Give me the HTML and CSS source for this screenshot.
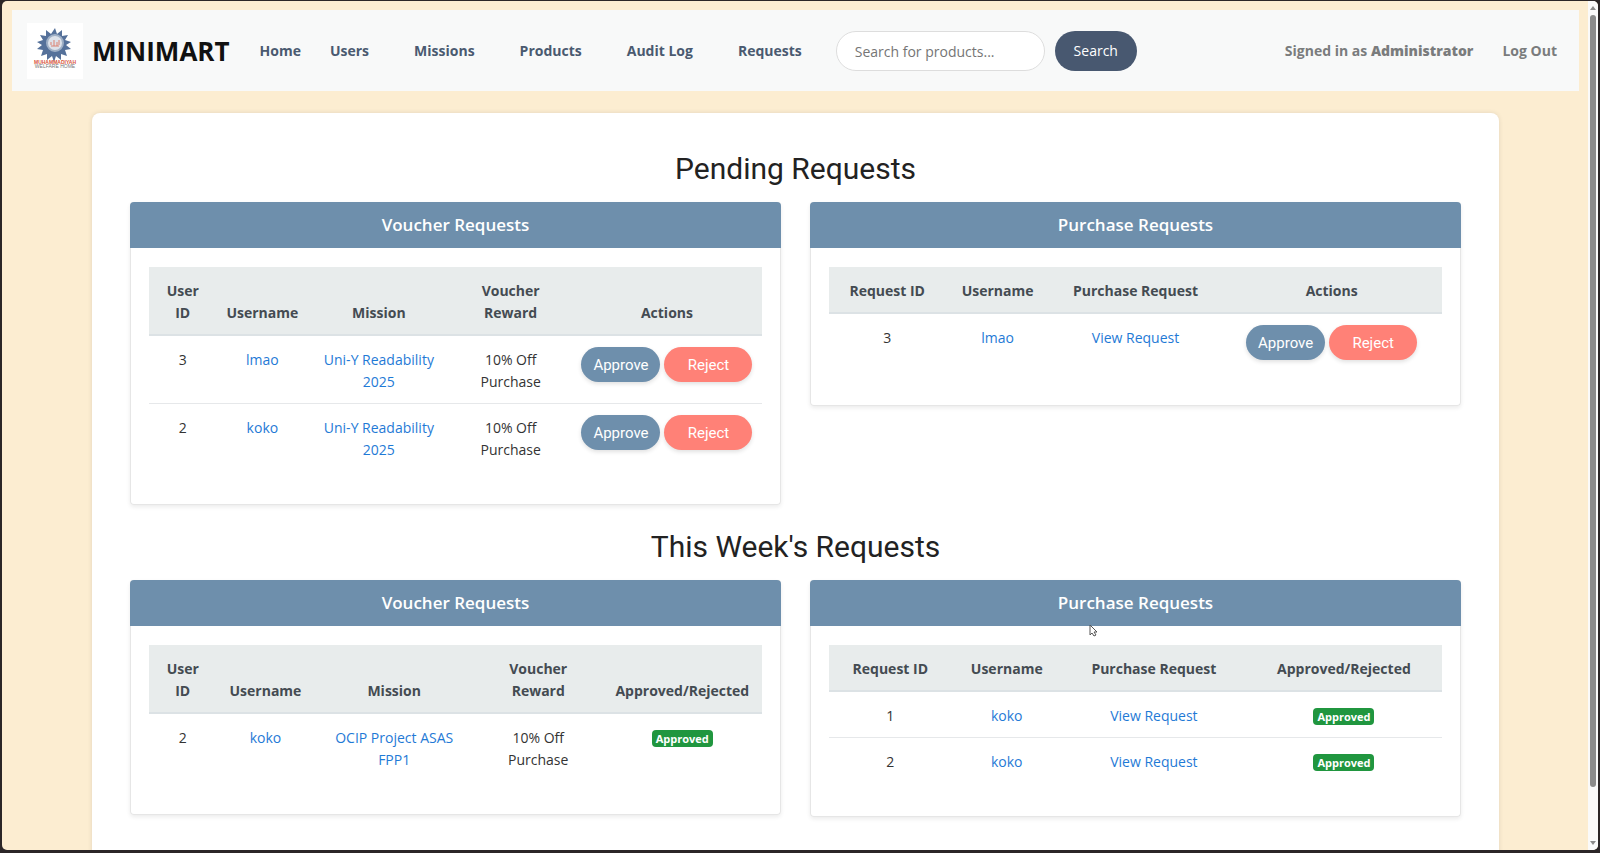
FILE: index.html
```html
<!DOCTYPE html>
<html lang="en">
<head>
	<title>Minimart - Requests</title>
	<meta charset="utf-8">
	<link rel="stylesheet" href="styles.css">
</head>
<body>
<div class="window">
	<div class="page">
		<nav class="navbar">
			<a class="brand" href="#">
				<svg class="logo" viewBox="0 0 56 56" aria-hidden="true">
					<rect width="56" height="56" fill="#fff"/>
					<path d="M28 5l2 6 5-4 0 6 6-1-3 5 6 2-5 3 5 4-6 1 2 6-6-2 0 6-5-4-2 6-2-6-5 4 0-6-6 2 2-6-6-1 5-4-5-3 6-2-3-5 6 1 0-6 5 4z" fill="#55719a"/>
					<circle cx="28" cy="20" r="8" fill="#dde2ea" stroke="#9fb0c6" stroke-width="2"/>
					<path d="M24 22v-3M27 23v-6M30 23v-4M32 22v-5M24 23h8" stroke="#dc8272" stroke-width="1" fill="none"/>
					<text x="28" y="41" class="logo-name">MUHAMMADIYAH</text>
					<text x="28" y="45" class="logo-sub">WELFARE HOME</text>
				</svg>
				<span>MINIMART</span>
			</a>
			<div class="links">
				<a class="home" href="#">Home</a>
				<a href="#">Users</a>
				<a href="#">Missions</a>
				<a href="#">Products</a>
				<a href="#">Audit Log</a>
				<a href="#">Requests</a>
			</div>
			<form class="search">
				<input type="text" placeholder="Search for products..." aria-label="Search for products">
				<button type="button">Search</button>
			</form>
			<div class="account">
				<span>Signed in as <b>Administrator</b></span>
				<a href="#">Log Out</a>
			</div>
		</nav>

		<main class="container">
			<h2>Pending Requests</h2>
			<div class="row">
				<section class="card">
					<h5>Voucher Requests</h5>
					<div class="card-body">
						<table class="vouchers">
							<thead>
								<tr><th>User ID</th><th>Username</th><th>Mission</th><th>Voucher Reward</th><th>Actions</th></tr>
							</thead>
							<tbody>
								<tr>
									<td>3</td>
									<td><a href="#">lmao</a></td>
									<td><a href="#">Uni-Y Readability 2025</a></td>
									<td>10% Off Purchase</td>
									<td class="actions-cell"><div class="actions"><button class="approve">Approve</button><button class="reject">Reject</button></div></td>
								</tr>
								<tr>
									<td>2</td>
									<td><a href="#">koko</a></td>
									<td><a href="#">Uni-Y Readability 2025</a></td>
									<td>10% Off Purchase</td>
									<td class="actions-cell"><div class="actions"><button class="approve">Approve</button><button class="reject">Reject</button></div></td>
								</tr>
							</tbody>
						</table>
					</div>
				</section>
				<section class="card">
					<h5>Purchase Requests</h5>
					<div class="card-body">
						<table class="purchases">
							<thead>
								<tr><th>Request ID</th><th>Username</th><th>Purchase Request</th><th>Actions</th></tr>
							</thead>
							<tbody>
								<tr>
									<td>3</td>
									<td><a href="#">lmao</a></td>
									<td><a href="#">View Request</a></td>
									<td class="actions-cell"><div class="actions"><button class="approve">Approve</button><button class="reject">Reject</button></div></td>
								</tr>
							</tbody>
						</table>
					</div>
				</section>
			</div>

			<h2>This Week's Requests</h2>
			<div class="row">
				<section class="card">
					<h5>Voucher Requests</h5>
					<div class="card-body">
						<table class="vouchers-done">
							<thead>
								<tr><th>User ID</th><th>Username</th><th>Mission</th><th>Voucher Reward</th><th>Approved/Rejected</th></tr>
							</thead>
							<tbody>
								<tr>
									<td>2</td>
									<td><a href="#">koko</a></td>
									<td><a href="#">OCIP Project ASAS FPP1</a></td>
									<td>10% Off Purchase</td>
									<td><span class="badge">Approved</span></td>
								</tr>
							</tbody>
						</table>
					</div>
				</section>
				<section class="card">
					<h5>Purchase Requests</h5>
					<div class="card-body">
						<table class="purchases-done">
							<thead>
								<tr><th>Request ID</th><th>Username</th><th>Purchase Request</th><th>Approved/Rejected</th></tr>
							</thead>
							<tbody>
								<tr>
									<td>1</td>
									<td><a href="#">koko</a></td>
									<td><a href="#">View Request</a></td>
									<td><span class="badge">Approved</span></td>
								</tr>
								<tr>
									<td>2</td>
									<td><a href="#">koko</a></td>
									<td><a href="#">View Request</a></td>
									<td><span class="badge">Approved</span></td>
								</tr>
							</tbody>
						</table>
					</div>
				</section>
			</div>
		</main>
	</div>
	<div class="scrollbar">
		<span class="arrow up"></span>
		<span class="thumb"></span>
		<span class="arrow down"></span>
	</div>
</div>
<svg class="cursor" viewBox="0 0 9 13" aria-hidden="true">
	<path d="M1 1v10l2-2 2 3 2-1-2-3h3z" fill="#fff" stroke="#555" stroke-width="1"/>
</svg>
</body>
</html>
```
FILE: styles.css
```css
*{
	box-sizing: border-box;
}
body{
	margin: 0;
	height: 100vh;
	padding: 1px 2px 3px;
	background: #2b2627;
	font: 14px/22px "Open Sans", "Noto Sans", sans-serif;
	color: #333;
	overflow: hidden;
}
a{
	color: #1f7ad6;
	text-decoration: none;
}
button, input{
	font: inherit;
}
.window{
	display: flex;
	height: 100%;
	border-radius: 5px;
	background: #fcedd1;
	overflow: hidden;
}
.page{
	flex: 1;
	padding: 9px 9px 0 10px;
	overflow: hidden;
}

/* navbar */
.navbar{
	display: flex;
	align-items: center;
	height: 81px;
	padding: 1px 22px 0 15px;
	background: #f8f9f9;
	font-weight: 700;
	white-space: nowrap;
}
.brand{
	display: flex;
	align-items: center;
	gap: 9px;
	color: #111;
	font-size: 26px;
}
.logo{
	width: 56px;
	height: 56px;
}
.logo-name, .logo-sub{
	font-family: "Liberation Sans", sans-serif;
	font-size: 5px;
	font-weight: 700;
	text-anchor: middle;
	fill: #d9573d;
}
.logo-sub{
	font-weight: 400;
	fill: #777;
}
.links{
	display: flex;
	gap: 45px;
	margin-left: 30px;
}
.links a{
	color: #4a5a70;
}
.links .home{
	margin-right: -16px;
}
.search{
	display: flex;
	gap: 10px;
	margin-left: 34px;
	font-weight: 400;
}
.search input{
	width: 209px;
	height: 40px;
	padding: 0 18px;
	border: 1px solid #ddd;
	border-radius: 20px;
	background: #fff;
}
.search input::placeholder{
	color: #757575;
}
.search button{
	width: 82px;
	height: 40px;
	padding: 0;
	border: 0;
	border-radius: 20px;
	background: #485870;
	color: #fff;
}
.account{
	display: flex;
	gap: 29px;
	margin-left: auto;
	color: #7a7c7d;
}
.account a{
	color: inherit;
}
.account b{
	font-weight: 800;
}

/* content */
.container{
	margin: 22px 80px 0;
	padding: 37px 38px 60px;
	border-radius: 8px;
	background: #fff;
	box-shadow: 0 0 5px rgba(0,0,0,.1);
}
h2{
	margin: 0 0 14px;
	font: 400 30px/38px Roboto, sans-serif;
	text-align: center;
	color: #222;
}
.row{
	display: grid;
	grid-template-columns: 1fr 1fr;
	align-items: start;
	gap: 29px;
	margin-bottom: 23px;
}
.card{
	border: 1px solid #e6e6e6;
	border-top: 0;
	border-radius: 4px;
	box-shadow: 0 2px 4px rgba(0,0,0,.08);
}
.card h5{
	margin: 0 -1px;
	border-radius: 4px 4px 0 0;
	background: #6e8fac;
	color: #fff;
	font-size: 17px;
	font-weight: 600;
	line-height: 46px;
	text-align: center;
}
.card-body{
	padding: 19px 18px 33px;
}

/* tables */
table{
	width: 100%;
	table-layout: fixed;
	border-collapse: separate;
	border-spacing: 0;
	text-align: center;
}
th{
	padding: 13px 10px 10px;
	border-bottom: 2px solid #dce2e5;
	background: #e8ecec;
	color: #444b52;
	font-weight: 700;
	vertical-align: bottom;
}
td{
	padding: 13px 8px 10px;
	vertical-align: top;
}
.actions-cell{
	padding: 11px 8px 12px;
}
tr + tr td{
	border-top: 1px solid #e6e8ea;
}
.vouchers th:nth-child(1), .vouchers-done th:nth-child(1){ width: 11%; }
.vouchers th:nth-child(2){ width: 15%; }
.vouchers th:nth-child(3){ width: 23%; }
.vouchers th:nth-child(4){ width: 20%; }
.vouchers-done th:nth-child(2){ width: 16%; }
.vouchers-done th:nth-child(3){ width: 26%; }
.vouchers-done th:nth-child(4){ width: 21%; }
.purchases th:nth-child(1){ width: 19%; }
.purchases th:nth-child(2){ width: 17%; }
.purchases th:nth-child(3){ width: 28%; }
.purchases-done th:nth-child(1){ width: 20%; }
.purchases-done th:nth-child(2){ width: 18%; }
.purchases-done th:nth-child(3){ width: 30%; }

.actions{
	display: flex;
	justify-content: center;
	gap: 4px;
}
.actions button{
	height: 35px;
	padding: 0;
	border: 0;
	border-radius: 18px;
	box-shadow: 0 2px 4px rgba(0,0,0,.12);
	color: #fff;
	font: 15px Roboto, sans-serif;
}
.actions .approve{
	width: 79px;
	background: #6e8fac;
}
.actions .reject{
	width: 88px;
	background: #ff8177;
}
.badge{
	display: inline-block;
	padding: 0 4px;
	border-radius: 4px;
	background: #20963f;
	color: #fff;
	font-size: 11px;
	font-weight: 700;
	line-height: 17px;
}

.scrollbar{
	display: flex;
	flex-direction: column;
	align-items: center;
	width: 10px;
	padding: 5px 0;
	background: #fafafa;
}
.thumb{
	width: 6px;
	height: 92%;
	margin: 5px 0 auto;
	border-radius: 3px;
	background: #8b8b8b;
}
.arrow{
	border: 3px solid transparent;
}
.up{
	border-top: 0;
	border-bottom: 4px solid #8b8b8b;
}
.down{
	border-bottom: 0;
	border-top: 4px solid #8b8b8b;
}
/* mouse pointer over the page */
.cursor{
	position: absolute;
	left: 1089px;
	top: 624px;
	width: 9px;
	height: 13px;
}
```
